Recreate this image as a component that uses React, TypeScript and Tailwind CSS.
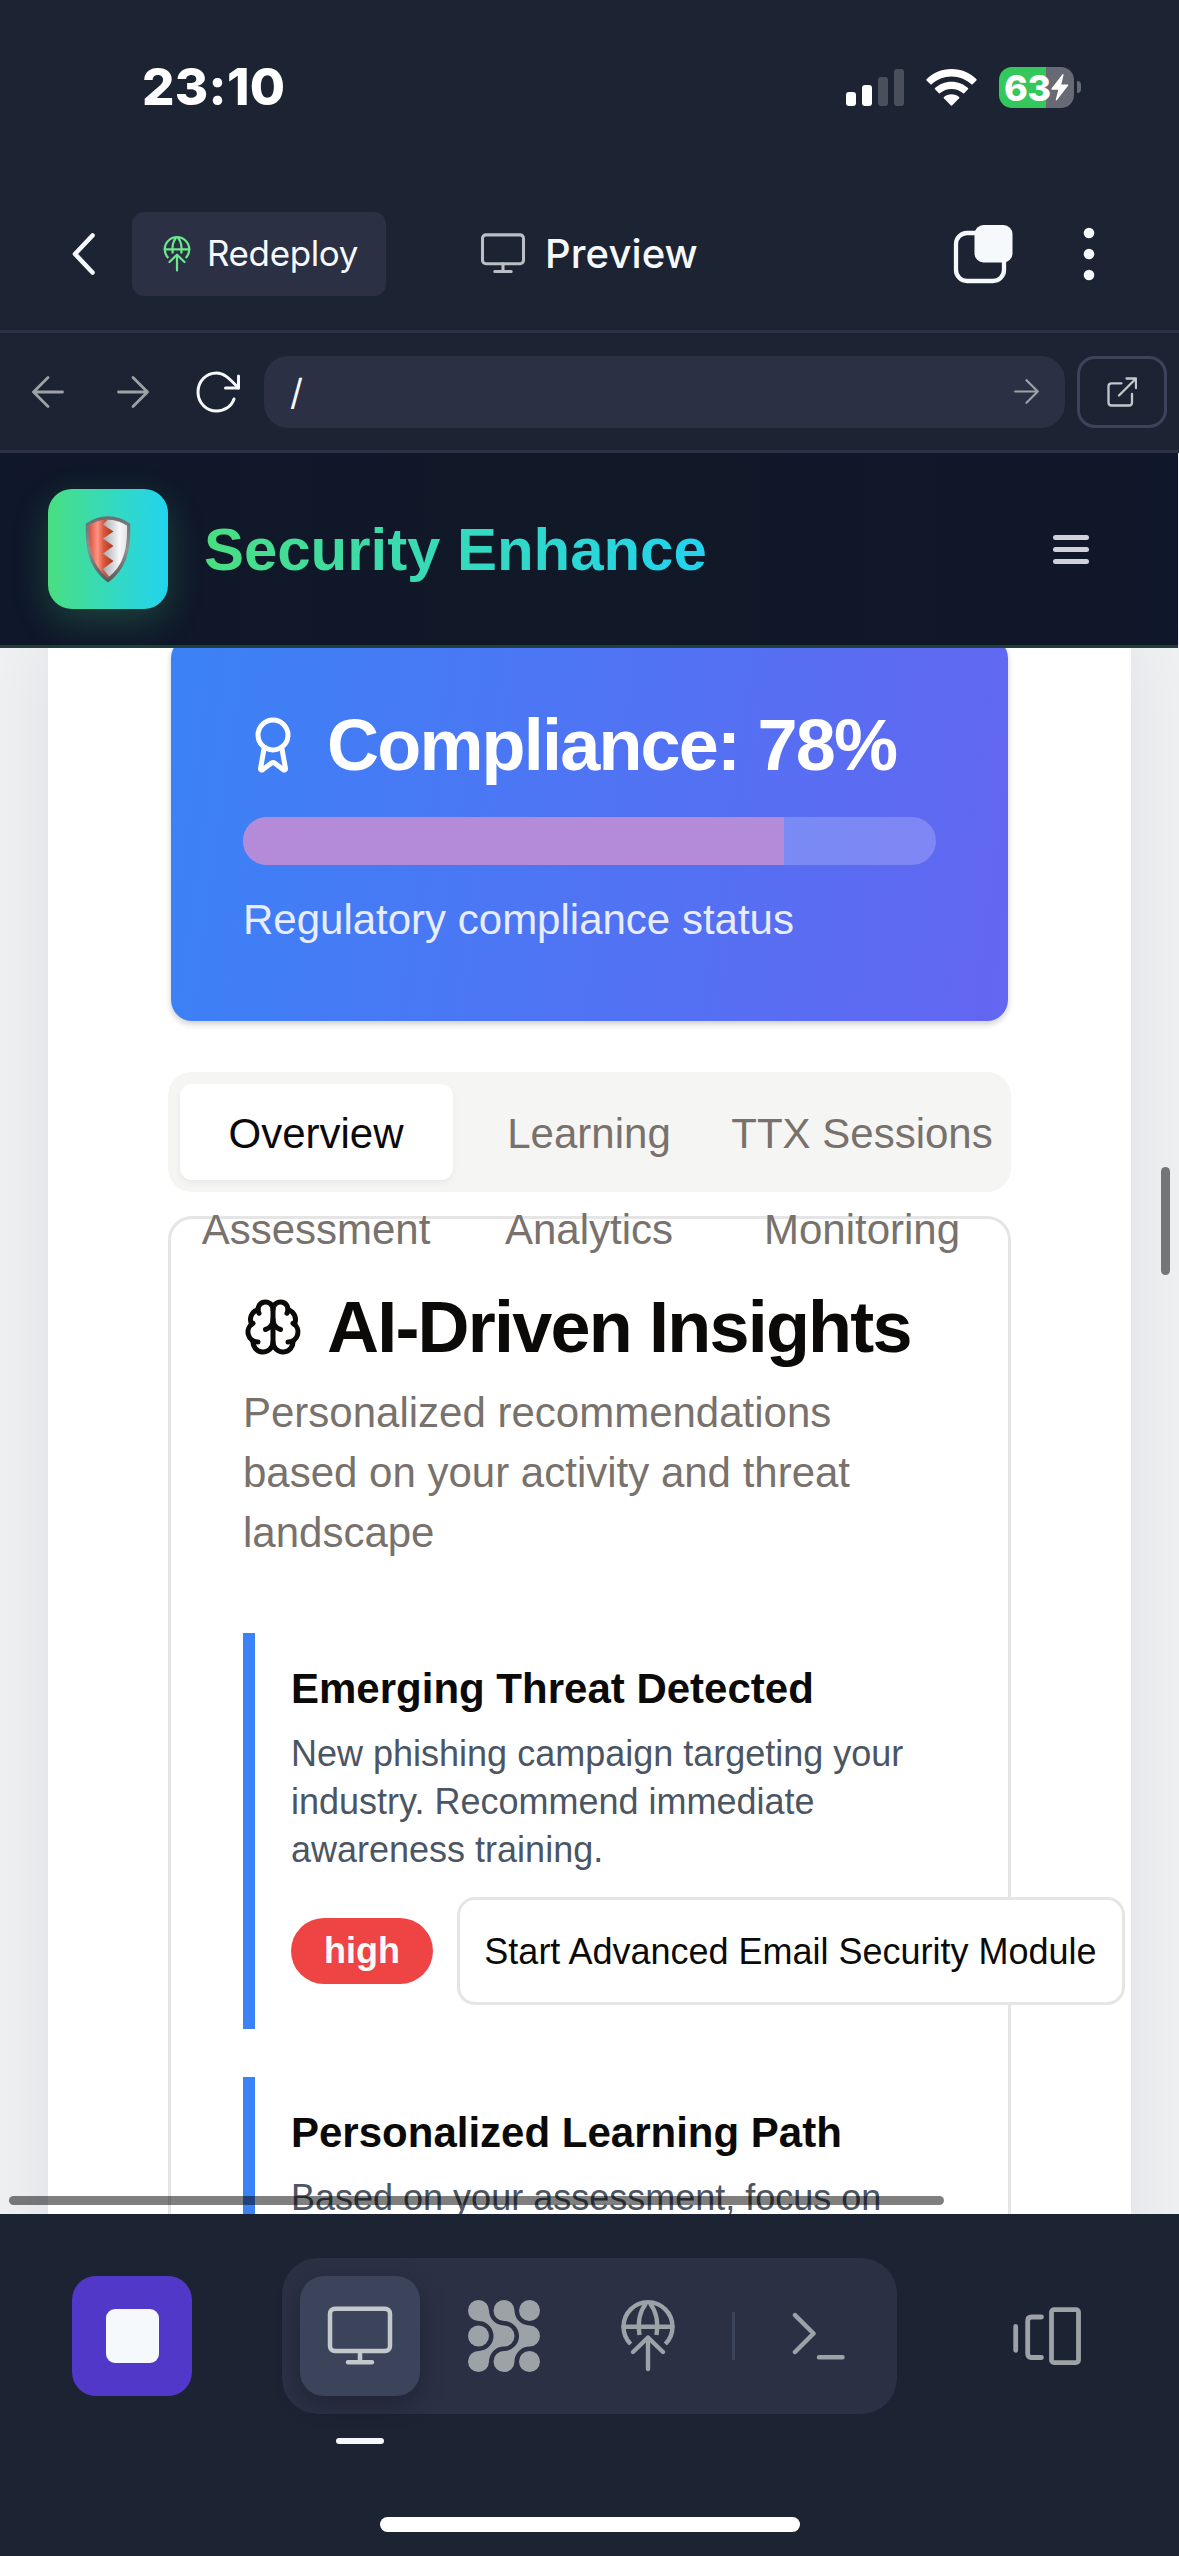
import React from "react";
import { Award, Brain } from "lucide-react";

function DeployIcon({ className }: { className: string }) {
  return (
    <svg viewBox="0 0 80 80" fill="none" stroke="currentColor" strokeWidth="4.4" strokeLinecap="round" strokeLinejoin="round" className={className}>
      <path d="M22.7 48 A24.5 24.5 0 1 1 57.3 48" strokeLinecap="butt" />
      <path d="M15.5 30.7H64.5" />
      <path d="M38 7.5C32 15 29.500 26 31.500 39" strokeLinecap="butt" />
      <path d="M42 7.5C48 15 50.500 26 48.500 39" strokeLinecap="butt" />
      <path d="M40 42V73" />
      <path d="M25 56L40 41.5L55 56" />
    </svg>
  );
}

function MonitorIcon({ className }: { className: string }) {
  return (
    <svg viewBox="0 0 66 60" fill="none" stroke="currentColor" strokeWidth="4.5" strokeLinecap="round" strokeLinejoin="round" className={className}>
      <rect x="3" y="2.7" width="60" height="42.3" rx="5" />
      <path d="M33 45V56.3M21 56.3H45" />
    </svg>
  );
}

function StatusBar() {
  return (
    <div className="flex h-[172px] items-start pl-[142px]">
      <div className="mt-[57px] w-[201px] text-[51px] leading-[60px] font-extrabold tracking-[0.3px] text-white">23:10</div>
      <svg viewBox="0 0 58 37" className="mt-[69px] ml-[503px] h-[37px] w-[58px] shrink-0">
        <rect x="0" y="23" width="10" height="14" rx="3" fill="#fff" />
        <rect x="16" y="16" width="10" height="21" rx="3" fill="#fff" />
        <rect x="32" y="8" width="10" height="29" rx="3" fill="#4a4f5c" />
        <rect x="48" y="0" width="10" height="37" rx="3" fill="#4a4f5c" />
      </svg>
      <svg viewBox="0 0 51 37" className="mt-[69px] ml-[22px] h-[37px] w-[51px] shrink-0" fill="#fff">
        <path d="M25.5 0C35.5 0 44.300 3.900 50.500 10.200Q51 10.900 50.400 11.600L46.600 15.300Q46 15.800 45.300 15.200C40 10.300 33.100 7.400 25.500 7.400S11 10.300 5.700 15.200Q5 15.800 4.400 15.300L.6 11.600Q0 10.900 .5 10.200C6.700 3.900 15.500 0 25.500 0Z" />
        <path d="M25.500 12.700C31.900 12.700 37.700 15.100 42 19.100Q42.500 19.700 42 20.300L38.100 24.200Q37.500 24.700 36.800 24.100C33.800 21.400 29.900 19.900 25.500 19.900S17.200 21.400 14.200 24.100Q13.500 24.700 12.900 24.200L9 20.300Q8.500 19.700 9 19.100C13.300 15.100 19.100 12.700 25.500 12.700Z" />
        <path d="M25.500 25.300C28.400 25.300 31 26.300 33.100 28Q33.600 28.600 33.100 29.200L26.300 36.300Q25.500 37 24.700 36.300L17.900 29.200Q17.400 28.600 17.900 28C20 26.300 22.600 25.300 25.500 25.300Z" />
      </svg>
      <div className="mt-[67px] ml-[22px] flex h-[41px] w-[75px] shrink-0 items-center rounded-[13px] bg-linear-to-r from-[#34c759] from-63% to-[#676a74] to-63% pl-[5px]">
        <span className="pt-px text-[36px] leading-[44px] font-extrabold tracking-[-0.3px] text-white">63</span>
        <svg viewBox="0 0 18 27" className="h-[27px] w-[18px]" fill="#fff">
          <path d="M11.500 .3Q12.800-.3 12.500 1L10.300 10.500H16.500Q17.800 10.600 17 11.800L5.800 26.200Q4.500 27.200 4.800 25.500L7.300 15.700H1Q-.2 15.500 .7 14.200Z" />
        </svg>
      </div>
      <div className="mt-[81px] ml-[3px] h-3 w-1 rounded-r-full bg-[#676a74]" />
    </div>
  );
}

function TopBar() {
  return (
    <div className="flex h-[161px] items-center border-b-[3px] border-[#2b3245]">
      <svg viewBox="0 0 24 42" className="mt-[5px] ml-[72px] h-[42px] w-6 shrink-0" fill="none" stroke="#f5f9fc" strokeWidth="4.6" strokeLinecap="round" strokeLinejoin="round">
        <path d="M20.500 2.500L3 21L20.500 39.500" />
      </svg>
      <div className="mt-[5px] ml-9 flex h-[84px] w-[254px] shrink-0 items-center rounded-xl bg-[#2b3045]">
        <DeployIcon className="ml-[25px] h-10 w-10 text-[#6de88a]" />
        <span className="ml-[10px] pb-px text-[35px] leading-[48px] tracking-[-0.4px] whitespace-nowrap text-[#f5f9fc]">Redeploy</span>
      </div>
      <MonitorIcon className="mt-[5px] ml-[94px] h-[41px] w-[46px] shrink-0 text-[#b9bfc4]" />
      <span className="mt-[5px] ml-[19px] w-[160px] text-[40px] leading-[48px] font-medium tracking-[0.1px] whitespace-nowrap text-[#f5f9fc]">Preview</span>
      <svg viewBox="0 0 62 60" className="mt-[5px] ml-[247px] h-[60px] w-[62px] shrink-0">
        <rect x="4" y="9" width="48" height="48" rx="11" fill="none" stroke="#f5f9fc" strokeWidth="4.300" />
        <rect x="22.500" y="1" width="38" height="37.500" rx="9" fill="#f5f9fc" />
      </svg>
      <svg viewBox="0 0 12 54" className="mt-[5px] ml-[69px] h-[54px] w-3 shrink-0" fill="#f5f9fc">
        <circle cx="6" cy="6" r="5.300" />
        <circle cx="6" cy="27" r="5.300" />
        <circle cx="6" cy="48" r="5.300" />
      </svg>
    </div>
  );
}

function ArrowRightIcon({ className }: { className: string }) {
  return (
    <svg viewBox="0 0 32 32" className={className} fill="none" stroke="currentColor" strokeWidth="2.800" strokeLinecap="round" strokeLinejoin="round">
      <path d="M1.500 16H30.500M16 1.500L30.500 16L16 30.500" />
    </svg>
  );
}

function UrlBar() {
  return (
    <div className="flex h-[120px] items-center border-b-[3px] border-[#2b3045]">
      <ArrowRightIcon className="ml-8 h-8 w-8 rotate-180 text-[#9da2a6]" />
      <ArrowRightIcon className="ml-[53px] h-8 w-8 text-[#9da2a6]" />
      <svg viewBox="0 0 46 42" className="ml-[46px] h-[42px] w-[46px] shrink-0" fill="none" stroke="#f5f9fc" strokeWidth="3" strokeLinecap="round" strokeLinejoin="round">
        <path d="M39 28C36.500 35.500 29.500 40 21.500 40C11 40 3 31.500 3 21S11 2 21.500 2C28.500 2 33 6 43.500 17" />
        <path d="M43.500 5V17H30.500" />
      </svg>
      <div className="ml-[23px] flex h-[72px] w-[801px] shrink-0 items-center rounded-[24px] bg-[#2b3045]">
        <span className="ml-[26px] text-[36px] leading-[48px] text-[#f5f9fc]">/</span>
        <ArrowRightIcon className="mr-[26px] ml-auto h-[25px] w-[25px] text-[#9da2a6]" />
      </div>
      <div className="ml-3 flex h-[72px] w-[90px] shrink-0 items-center justify-center rounded-[18px] border-[3px] border-[#3c445c]">
        <svg viewBox="0 0 30 30" className="h-[30px] w-[30px]" fill="none" stroke="#c2c8cc" strokeWidth="2.300" strokeLinecap="round" strokeLinejoin="round">
          <path d="M14.500 6.300H4.500Q1.500 6.300 1.500 9.300V25.500Q1.500 28.500 4.500 28.500H22Q25 28.500 25 25.500V17" />
          <path d="M19.500 1.500H29V11M29 1.500L12 18.500" />
        </svg>
      </div>
    </div>
  );
}

function ShieldIcon() {
  return (
    <svg viewBox="0 0 46 68" className="h-[68px] w-[46px]">
      <defs>
        <linearGradient id="shieldRed" x1="0" x2="1" y1="0" y2="0">
          <stop offset="0" stopColor="#d9503c" />
          <stop offset=".35" stopColor="#ff9484" />
          <stop offset=".6" stopColor="#d9573c" />
          <stop offset="1" stopColor="#a83620" />
        </linearGradient>
        <linearGradient id="shieldWhite" x1="0" x2="1" y1="0" y2="0">
          <stop offset=".35" stopColor="#a3a6aa" />
          <stop offset=".8" stopColor="#f7f7f9" />
          <stop offset="1" stopColor="#e2e3e6" />
        </linearGradient>
        <linearGradient id="shieldRim" x1="0" x2="0" y1="0" y2="1">
          <stop offset="0" stopColor="#6b6d6f" />
          <stop offset=".5" stopColor="#8d9091" />
          <stop offset="1" stopColor="#565859" />
        </linearGradient>
      </defs>
      <path d="M.8 8.500Q23-6 45.200 8.500C46 34 42 54 23 67.500C4 54 0 34 .8 8.500Z" fill="url(#shieldRim)" />
      <path d="M4 10.500Q23-1 42 10.500C42.500 33 39 50 23 62.500C7 50 3.500 33 4 10.500Z" fill="url(#shieldWhite)" />
      <path d="M4 10.500Q14 4.500 23 4.500L18 9.500L28.500 16.500L18 23.500L28.500 31L18 38.500L28.500 46L18 54L24 61.500L23 62.500C7 50 3.500 33 4 10.500Z" fill="url(#shieldRed)" />
    </svg>
  );
}

function SiteHeader() {
  return (
    <header className="relative z-20 mr-px flex h-[195px] items-center border-b-[3px] border-[#1e3f3a] bg-linear-to-r from-[#0f172a] via-[#111827] to-[#0f172a] pl-12">
      <div className="flex h-[120px] w-[120px] shrink-0 items-center justify-center rounded-[24px] bg-linear-to-r from-[#4ade80] to-[#22d3ee] shadow-[0_12px_36px_rgba(74,222,128,0.22)]">
        <ShieldIcon />
      </div>
      <h1 className="ml-9 w-[502px] bg-linear-to-r from-[#4ade80] to-[#22d3ee] bg-clip-text pt-px text-[60px] leading-[84px] font-bold tracking-[-0.05px] whitespace-nowrap text-transparent">
        Security Enhance
      </h1>
      <div className="mr-[89px] ml-auto flex w-9 flex-col gap-[7px]">
        <div className="h-[5px] rounded-full bg-[#d1d1dc]" />
        <div className="h-[5px] rounded-full bg-[#d1d1dc]" />
        <div className="h-[5px] rounded-full bg-[#d1d1dc]" />
      </div>
    </header>
  );
}

function ComplianceCard() {
  return (
    <section className="mx-[3px] -mt-[11px] h-[384px] rounded-[21px] bg-[linear-gradient(98deg,#3b82f6,#6366f1)] px-[72px] pt-[72px] shadow-[0_3px_6px_rgba(0,0,0,0.2)]">
      <div className="flex h-[72px] items-center gap-6">
        <Award className="h-[60px] w-[60px] shrink-0 text-white" strokeWidth={2} />
        <h2 className="text-[72px] leading-[72px] font-bold tracking-[-1.800px] whitespace-nowrap text-white">Compliance: 78%</h2>
      </div>
      <div className="mt-9 h-12 overflow-hidden rounded-full bg-white/20">
        <div className="h-full w-[78%] bg-[#b48bd8]" />
      </div>
      <p className="mt-6 pt-px text-[42px] leading-[60px] whitespace-nowrap text-[#e8edfe]">Regulatory compliance status</p>
    </section>
  );
}

const tabs = ["Overview", "Learning", "TTX Sessions", "Assessment", "Analytics", "Monitoring"];

function Tabs() {
  return (
    <nav className="relative z-10 mt-[51px] h-[120px] rounded-[24px] bg-[#f5f5f4] p-3">
      <div className="grid grid-cols-3">
        {tabs.map((tab, i) => (
          <div
            key={tab}
            className={
              i === 0
                ? "flex h-24 items-center justify-center rounded-xl bg-white pt-[3px] pr-px text-[42px] leading-[60px] text-[#0c0a09] shadow-[0_3px_6px_rgba(0,0,0,0.05)]"
                : "flex h-24 items-center justify-center pt-[3px] pr-px text-[42px] leading-[60px] whitespace-nowrap text-[#78716c]"
            }
          >
            {tab}
          </div>
        ))}
      </div>
    </nav>
  );
}

function Insight({ title, lines, children }: { title: string; lines: string[]; children?: React.ReactNode }) {
  return (
    <article className="h-[396px] border-l-[12px] border-[#3b82f6] py-6 pl-9">
      <h3 className="pt-0.5 text-[42px] leading-[60px] font-bold whitespace-nowrap text-[#0c0a09]">{title}</h3>
      <div className="mt-[11px] text-[36px] leading-[48px] text-[#4b5563]">
        {lines.map((line) => (
          <p key={line} className="whitespace-nowrap">{line}</p>
        ))}
      </div>
      {children}
    </article>
  );
}

function InsightsCard() {
  return (
    <section className="mt-6 rounded-[24px] border-[3px] border-[#e5e5e5] p-[72px]">
      <div className="flex h-[72px] items-center gap-6">
        <Brain className="h-[60px] w-[60px] shrink-0 text-[#0c0a09]" strokeWidth={2} />
        <h2 className="text-[72px] leading-[72px] font-bold tracking-[-1.800px] whitespace-nowrap text-[#0c0a09]">AI-Driven Insights</h2>
      </div>
      <div className="mt-5 text-[42px] leading-[60px] whitespace-nowrap text-[#78716c]">
        <p>Personalized recommendations</p>
        <p>based on your activity and threat</p>
        <p>landscape</p>
      </div>
      <div className="mt-[70px] flex flex-col gap-12">
        <Insight title="Emerging Threat Detected" lines={["New phishing campaign targeting your", "industry. Recommend immediate", "awareness training."]}>
          <div className="mt-[23px] flex items-center gap-6">
            <span className="flex h-[66px] w-[142px] shrink-0 items-center justify-center rounded-full bg-[#ef4444] text-[36px] leading-[48px] font-bold text-[#fafaf9]">high</span>
            <span className="flex h-[108px] w-[668px] shrink-0 items-center justify-center rounded-[18px] border-[3px] border-[#e5e5e5] bg-white pt-px pr-px text-[36px] leading-[48px] whitespace-nowrap text-[#0c0a09]">
              Start Advanced Email Security Module
            </span>
          </div>
        </Insight>
        <Insight title="Personalized Learning Path" lines={["Based on your assessment, focus on"]} />
      </div>
    </section>
  );
}

function BottomBar() {
  const node = "M10.500 0A10.500 10.500 0 0 1 21 10.500A15 15 0 0 0 36 25.500A10.500 10.500 0 0 1 36 46.500A15 15 0 0 0 21 61.500A10.500 10.500 0 1 1 10.500 51A15 15 0 0 0 10.500 21A10.500 10.500 0 0 1 10.500 0Z";
  return (
    <footer className="flex h-[342px] flex-col items-center">
      <div className="flex w-full pt-11">
        <div className="mt-[18px] ml-[72px] flex h-[120px] w-[120px] items-center justify-center rounded-[24px] bg-[#5238c8] pl-px">
          <div className="h-[54px] w-[53px] rounded-[9px] bg-[#f5f9fc]" />
        </div>
        <div className="relative ml-[90px] flex h-[156px] w-[615px] items-center rounded-[36px] bg-[#2b3045]">
          <div className="ml-[18px] flex h-[120px] w-[120px] items-center justify-center rounded-[24px] bg-[#3c445c] shadow-[0_8px_24px_rgba(2,2,3,0.25)]">
            <MonitorIcon className="h-[60px] w-[66px] text-[#c2c8cc]" />
          </div>
          <svg viewBox="0 0 72 72" className="ml-12 h-[72px] w-[72px]" fill="#9da2a6">
            <path d={node} />
            <path d={node} transform="translate(25.500 0)" />
            <circle cx="61.500" cy="10.500" r="10.500" />
            <circle cx="10.500" cy="36" r="10.500" />
            <circle cx="61.500" cy="61.500" r="10.500" />
          </svg>
          <DeployIcon className="ml-[68px] h-20 w-20 text-[#9da2a6]" />
          <div className="ml-11 h-12 w-[3px] bg-[#3c445c]" />
          <svg viewBox="0 0 54 48" className="ml-[57px] h-12 w-[54px]" fill="none" stroke="#9da2a6" strokeWidth="4.500" strokeLinecap="round" strokeLinejoin="round">
            <path d="M3 3.200L21.500 21.500L3 40M27 45.200H50.500" />
          </svg>
          <div className="absolute top-[180px] left-[54px] h-1.5 w-12 rounded-full bg-[#f5f9fc]" />
        </div>
        <svg viewBox="0 0 69 60" className="mt-12 ml-[115px] h-[60px] w-[69px]" fill="none" stroke="#9da2a6" strokeWidth="4.800" strokeLinecap="round" strokeLinejoin="round">
          <path d="M3.700 20.500V44.300M29.500 11H19.500Q15.700 11 15.700 15V47.500Q15.700 51.500 19.500 51.500H29.500" />
          <rect x="39.500" y="3.600" width="27" height="53" rx="2.500" />
        </svg>
      </div>
      <div className="mt-[103px] h-[15px] w-[420px] rounded-full bg-white" />
    </footer>
  );
}

export default function App() {
  return (
    <div className="flex h-[2556px] w-[1179px] flex-col overflow-hidden bg-[#1c2333] font-['Inter',sans-serif]">
      <StatusBar />
      <TopBar />
      <UrlBar />
      <div className="relative h-[1761px] shrink-0 overflow-hidden bg-[#f0f1f3] font-['Liberation_Sans',Arial,sans-serif]">
        <SiteHeader />
        <main className="mx-12 h-[1800px] w-[1083px] bg-white px-[120px] shadow-[0_0_75px_rgba(15,23,42,0.08)]">
          <ComplianceCard />
          <Tabs />
          <InsightsCard />
        </main>
        <div className="absolute top-[714px] right-[9px] h-[108px] w-[9px] rounded-full bg-[#757575]" />
        <div className="absolute bottom-[9px] left-[9px] h-[9px] w-[935px] rounded-full bg-black/50" />
      </div>
      <BottomBar />
    </div>
  );
}
